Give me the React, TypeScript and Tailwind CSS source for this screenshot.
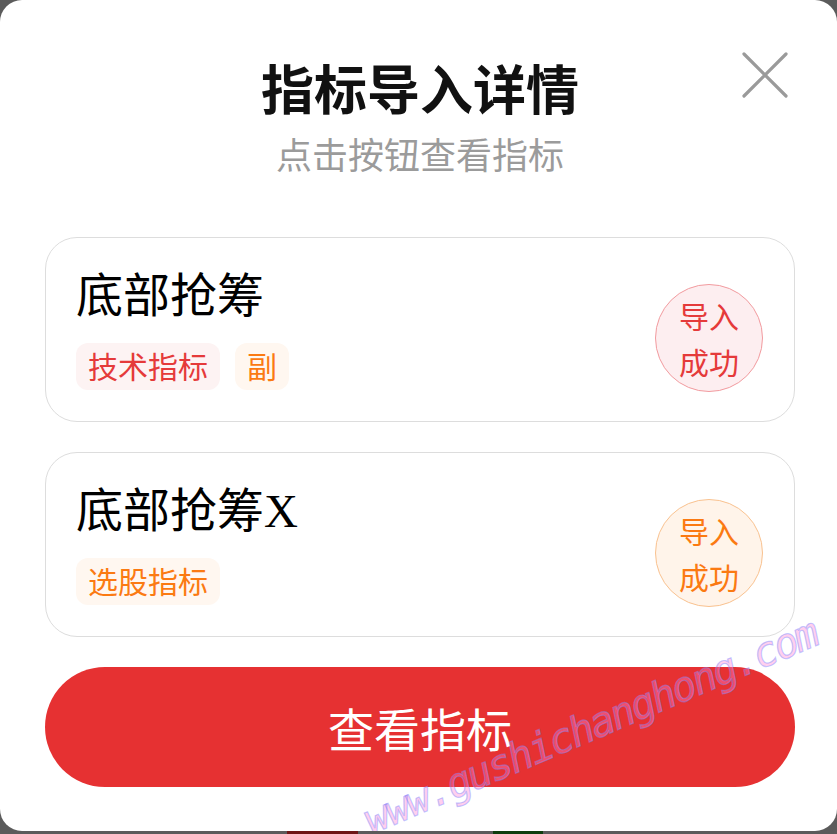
const items = [
  {
    name: '底部抢筹',
    tone: 'red',
    tags: [
      { label: '技术指标', tone: 'red' },
      { label: '副', tone: 'orange' },
    ],
  },
  {
    name: '底部抢筹X',
    tone: 'orange',
    tags: [{ label: '选股指标', tone: 'orange' }],
  },
];

const tagStyles: Record<string, string> = {
  red: 'bg-[#fdf3f3] text-[#e53a3a]',
  orange: 'bg-[#fff7f0] text-[#fb7a12]',
};

const badgeStyles: Record<string, string> = {
  red: 'bg-[#fdeef0] border-[#f29b9f] text-[#e53a3a]',
  orange: 'bg-[#fff4ea] border-[#f9c290] text-[#fb7a12]',
};

function CloseIcon() {
  return (
    <svg width="46" height="46" viewBox="0 0 46 46" fill="none">
      <path d="M2 2L44 44M44 2L2 44" stroke="#9a9a9a" strokeWidth="3.2" strokeLinecap="round" />
    </svg>
  );
}

export default function App() {
  return (
    <div className="h-[834px] w-[837px] bg-[#5b5b5b] font-['Noto_Sans_CJK_SC',sans-serif]">
      <div className="relative h-[831px] overflow-hidden rounded-[22px] bg-white pl-[45px] pr-[42px]">
        <button className="absolute left-[742px] top-[52px]">
          <CloseIcon />
        </button>

        <div className="pt-[59px] text-center">
          <h1 className="text-[53px] font-bold leading-[56px] text-[#111]">指标导入详情</h1>
          <p className="mt-[18px] text-[36px] leading-[40px] text-[#9b9b9b]">点击按钮查看指标</p>
        </div>

        <div className="mt-[64px] flex flex-col gap-[30px]">
          {items.map(item => (
            <div
              key={item.name}
              className="flex h-[185px] items-center justify-between rounded-[32px] border border-[#dddddd] pl-[30px] pr-[31px]"
            >
              <div className="flex h-full flex-col pt-[33px]">
                <p className="font-['Liberation_Serif','Noto_Sans_CJK_SC',serif] text-[47px] leading-[50px] text-black">
                  {item.name}
                </p>
                <div className="mt-[22px] flex gap-[15px]">
                  {item.tags.map(tag => (
                    <span
                      key={tag.label}
                      className={`flex h-[47px] items-center rounded-[12px] px-[12px] pb-[3px] text-[30px] leading-none ${tagStyles[tag.tone]}`}
                    >
                      {tag.label}
                    </span>
                  ))}
                </div>
              </div>
              <div
                className={`mt-[16px] flex h-[108px] w-[108px] flex-col items-center justify-center rounded-full border text-[30px] leading-[46px] ${badgeStyles[item.tone]}`}
              >
                <span>导入</span>
                <span>成功</span>
              </div>
            </div>
          ))}
        </div>

        <button className="mt-[30px] flex h-[120px] w-full items-center justify-center rounded-full bg-[#e63132] text-[46px] text-white">
          查看指标
        </button>

        <span className="pointer-events-none absolute left-[374px] top-[800px] origin-bottom-left -rotate-[23deg] whitespace-nowrap font-['DejaVu_Sans_Mono',monospace] text-[41px] italic leading-none tracking-[-2.5px] text-[rgba(255,130,210,0.38)] [-webkit-text-stroke:1.2px_rgba(125,135,255,0.45)]">
          www.gushichanghong.com
        </span>
      </div>
      <div className="flex h-[3px]">
        <div className="ml-[287px] w-[71px] bg-[#6e1616]" />
        <div className="ml-[135px] w-[50px] bg-[#0d3d0d]" />
      </div>
    </div>
  );
}
